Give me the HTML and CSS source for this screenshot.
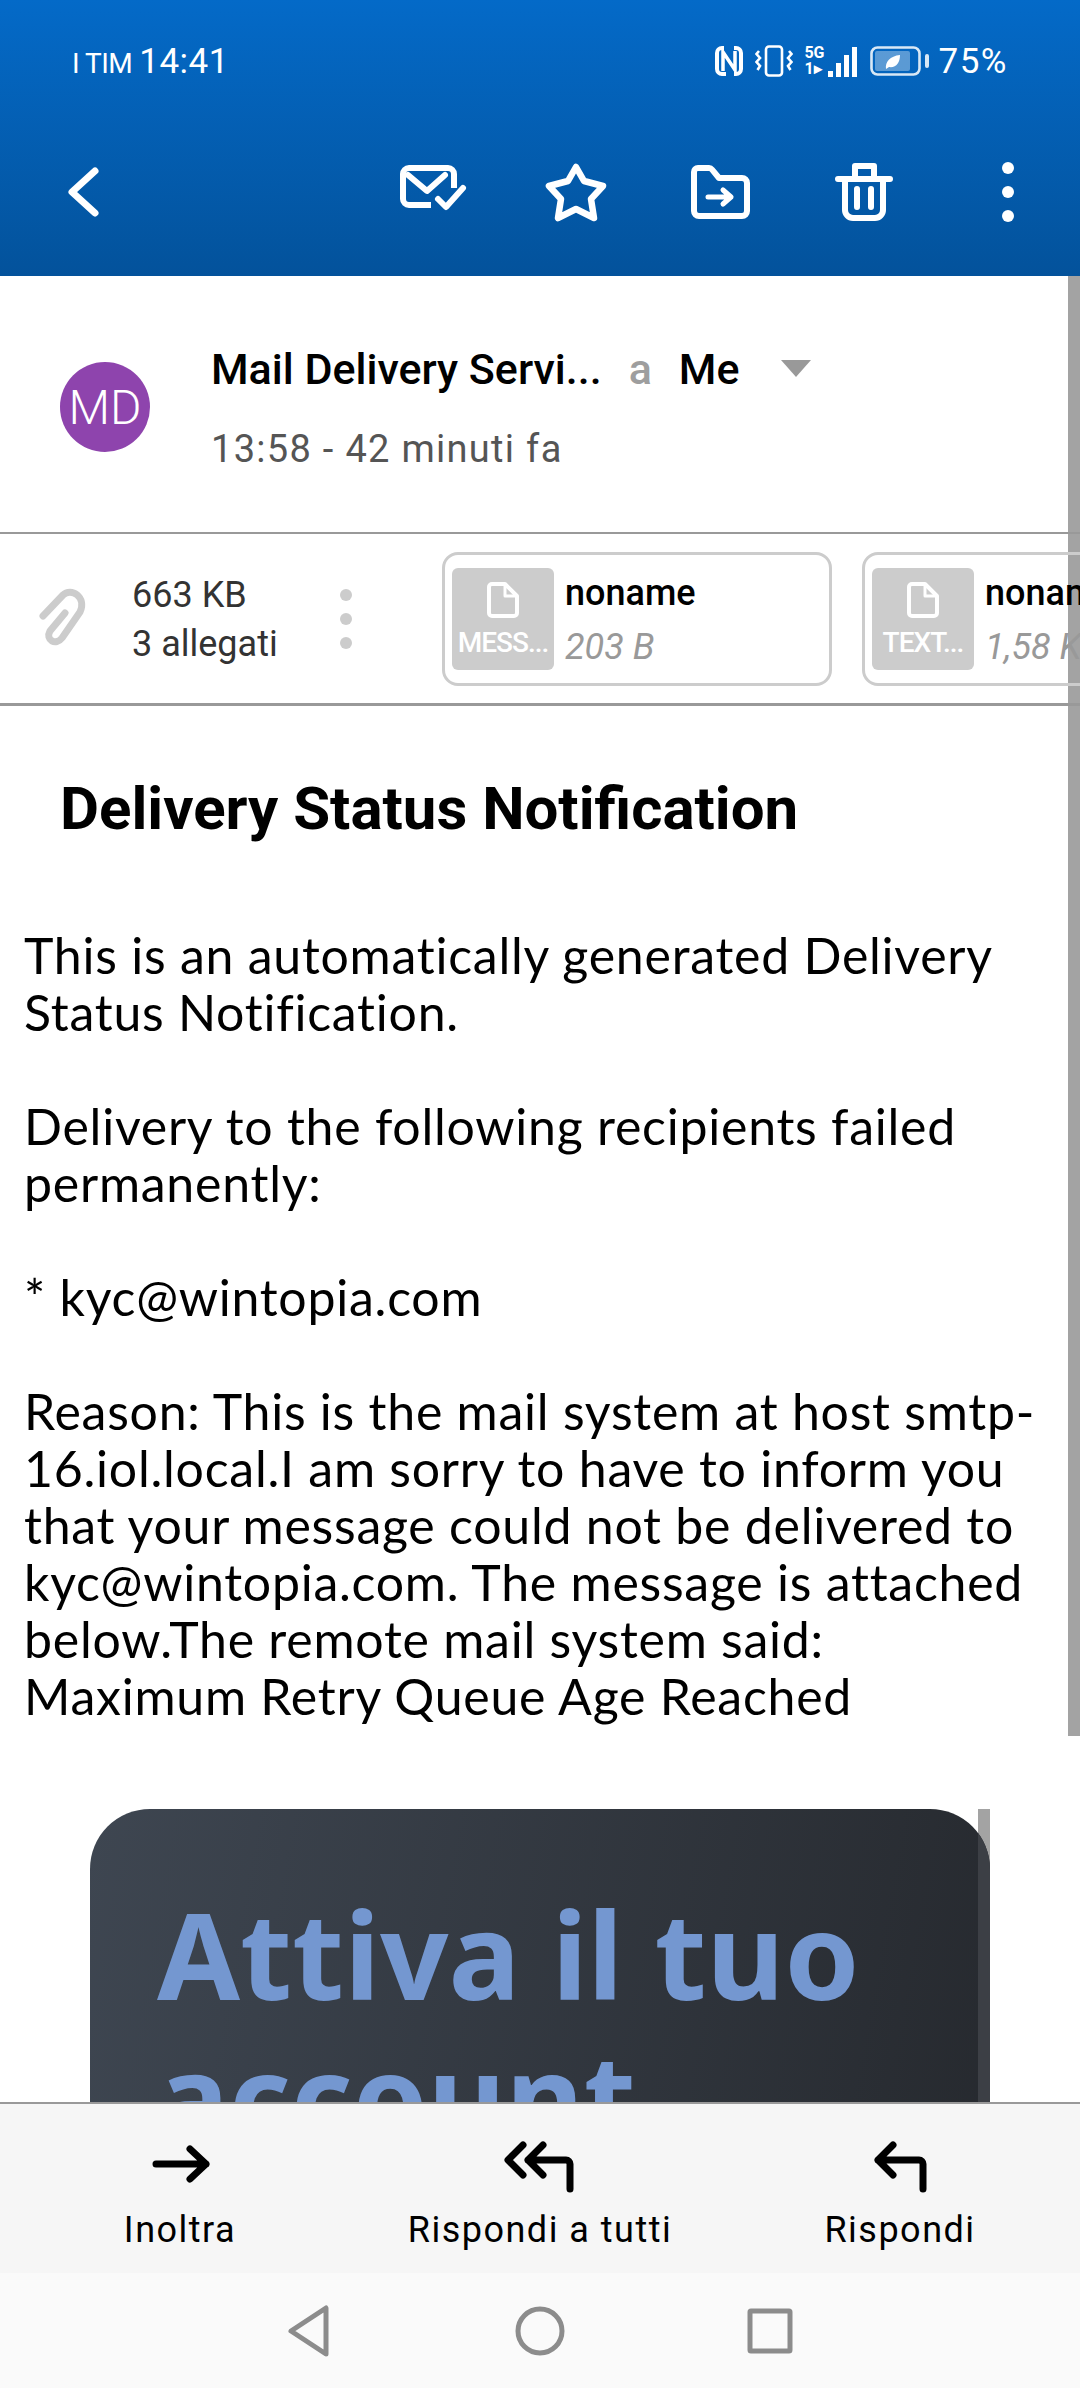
FILE: index.html
```html
<!DOCTYPE html>
<html lang="en">
<head>
  <meta charset="UTF-8">
  <meta name="viewport" content="width=device-width, initial-scale=1.0">
  <title>Delivery Status Notification</title>
  <link rel="stylesheet" href="styles.css">
</head>
<body>
  <div class="app">
    <div class="header">
      <div class="status-bar">
        <div class="status-left">
          <span class="carrier">I TIM</span>
          <span class="clock">14:41</span>
        </div>
        <div class="status-right">
          <!-- nfc -->
          <svg class="st-nfc" viewBox="0 0 28 30" width="28" height="30" fill="none" stroke="#fff">
            <path d="M9 2H7a5 5 0 0 0-5 5v16a5 5 0 0 0 5 5h4M19 2h2a5 5 0 0 1 5 5v16a5 5 0 0 1-5 5h-2" stroke-width="4"/>
            <path d="M8 25V6l12 18V5" stroke-width="3.500"/>
          </svg>
          <!-- vibrate -->
          <svg class="st-vib" viewBox="0 0 38 32" width="38" height="32" fill="none" stroke="#fff" stroke-width="2.600">
            <rect x="11" y="1.500" width="16" height="29" rx="3"/>
            <path d="M4 6 1.500 9 5 13 1.500 17 5 21 2.500 25M34 6l2.500 3L33 13l3.500 4L33 21l2.500 4"/>
          </svg>
          <!-- signal -->
          <div class="st-signal">
            <div class="net">
              <span>5G</span>
              <span>1&#9656;</span>
            </div>
            <div class="bars">
              <i class="b1"></i><i class="b2"></i><i class="b3"></i><i class="b4"></i>
            </div>
          </div>
          <!-- battery -->
          <svg class="st-bat" viewBox="0 0 60 30" width="60" height="30" fill="none">
            <rect x="1.500" y="1.500" width="48" height="27" rx="6" stroke="#fff" stroke-opacity=".85" stroke-width="2.600"/>
            <rect x="5" y="5" width="35" height="20" rx="2" fill="#fff" fill-opacity=".35"/>
            <rect x="55" y="8" width="4" height="14" rx="2" fill="#fff" fill-opacity=".85"/>
            <path d="M16 23c-1-7 4-13 14-14 0 8-4 13-11 12l-3 2z" fill="#fff"/>
          </svg>
          <span class="battery-pct">75%</span>
        </div>
      </div>
      <div class="toolbar">
        <div class="tool back">
          <svg viewBox="0 0 72 72" width="72" height="72" fill="none" stroke="#fff" stroke-width="7" stroke-linecap="round" stroke-linejoin="round">
            <path d="M47 15 24 36l23 21" />
          </svg>
        </div>
        <div class="tool-spacer"></div>
        <div class="tool">
          <svg viewBox="0 0 72 72" width="72" height="72" fill="none" stroke="#fff" stroke-width="6" stroke-linecap="round" stroke-linejoin="round">
            <path d="M35 49H13a6 6 0 0 1-6-6V18a6 6 0 0 1 6-6h39a6 6 0 0 1 6 6v14" stroke-linecap="butt"/>
            <path d="m12 19 19 16 18-16"/>
            <path d="m42 43 8 8 17-19"/>
          </svg>
        </div>
        <div class="tool">
          <svg viewBox="0 0 72 72" width="72" height="72" fill="none" stroke="#fff" stroke-width="6.500" stroke-linejoin="round">
            <path d="M36 11 44 25 63 30 51 43 54 62 36 53 18 62 21 43 9 30 28 25Z"/>
          </svg>
        </div>
        <div class="tool">
          <svg viewBox="0 0 72 72" width="72" height="72" fill="none" stroke="#fff" stroke-width="6" stroke-linecap="round" stroke-linejoin="round">
            <path d="M14 12h11a4 4 0 0 1 3 1.500L35 22h23a5 5 0 0 1 5 5v28a5 5 0 0 1-5 5H15a5 5 0 0 1-5-5V16a4 4 0 0 1 4-4z"/>
            <path d="M24 41h23M39 34l8 7-8 7" stroke-width="5"/>
          </svg>
        </div>
        <div class="tool">
          <svg viewBox="0 0 72 72" width="72" height="72" fill="none" stroke="#fff" stroke-width="6" stroke-linecap="round" stroke-linejoin="round">
            <path d="M10 23h52M27 23V10h19v13M17 23v31a8 8 0 0 0 8 8h22a8 8 0 0 0 8-8V23M29 33v18M43 33v18"/>
          </svg>
        </div>
        <div class="tool">
          <div class="dots">
            <i></i><i></i><i></i>
          </div>
        </div>
      </div>
    </div>

    <div class="mail">
      <div class="scrollbar"></div>

      <div class="sender-row">
        <div class="avatar">MD</div>
        <div class="sender-info">
          <div class="sender-line">
            <span class="sender-name">Mail Delivery Servi...</span>
            <span class="sender-to">a</span>
            <span class="sender-me">Me</span>
            <span class="sender-caret"></span>
          </div>
          <div class="sender-time">13:58 - 42 minuti fa</div>
        </div>
      </div>

      <div class="attach-row">
        <svg class="clip" viewBox="0 0 56 66" width="56" height="66" fill="none" stroke="#ccc" stroke-width="7" stroke-linecap="round" stroke-linejoin="round">
          <path d="M5 30 25 9c8-8 24 2 17 17L24 52c-6 8-17 2-12-7l15-18"/>
        </svg>
        <div class="attach-summary">
          <div>663 KB</div>
          <div>3 allegati</div>
        </div>
        <div class="attach-more">
          <i></i><i></i><i></i>
        </div>
        <div class="chip">
          <div class="thumb">
            <svg viewBox="0 0 32 36" width="32" height="36" fill="none" stroke="#fff" stroke-width="4" stroke-linejoin="round">
              <path d="M5 2h13l12 12v17a3 3 0 0 1-3 3H5a3 3 0 0 1-3-3V5a3 3 0 0 1 3-3z"/>
              <path d="M18 3v11h11" stroke-width="3"/>
            </svg>
            <span>MESS...</span>
          </div>
          <div class="chip-text">
            <div class="chip-name">noname</div>
            <div class="chip-size">203 B</div>
          </div>
        </div>
        <div class="chip">
          <div class="thumb">
            <svg viewBox="0 0 32 36" width="32" height="36" fill="none" stroke="#fff" stroke-width="4" stroke-linejoin="round">
              <path d="M5 2h13l12 12v17a3 3 0 0 1-3 3H5a3 3 0 0 1-3-3V5a3 3 0 0 1 3-3z"/>
              <path d="M18 3v11h11" stroke-width="3"/>
            </svg>
            <span>TEXT...</span>
          </div>
          <div class="chip-text">
            <div class="chip-name">noname</div>
            <div class="chip-size">1,58 KB</div>
          </div>
        </div>
      </div>

      <h1 class="subject">Delivery Status Notification</h1>

      <div class="body-text">
        This is an automatically generated Delivery Status Notification.<br><br>
        Delivery to the following recipients failed permanently:<br><br>
        * kyc@wintopia.com<br><br>
        Reason: This is the mail system at host smtp-16.iol.local.I am sorry to have to inform you that your message could not be delivered to kyc@wintopia.com. The message is attached below.The remote mail system said:<br>
        Maximum Retry Queue Age Reached
      </div>

      <div class="promo">
        <div class="promo-track"></div>
        <div class="promo-card">
          <div class="promo-title">Attiva il tuo account</div>
          <div class="promo-thumb"></div>
        </div>
      </div>
    </div>

    <div class="actions">
      <div class="action">
        <svg viewBox="0 0 72 60" width="72" height="60" fill="none" stroke="#000" stroke-width="7" stroke-linecap="round" stroke-linejoin="round">
          <path d="M12 27h50M46 12l16 15-16 15"/>
        </svg>
        <span>Inoltra</span>
      </div>
      <div class="action">
        <svg viewBox="0 0 72 60" width="72" height="60" fill="none" stroke="#000" stroke-width="7" stroke-linecap="round" stroke-linejoin="round">
          <path d="M19 8 4 23l15 15M39 8 24 23l15 15M24 23h38a4 4 0 0 1 4 4v25"/>
        </svg>
        <span>Rispondi a tutti</span>
      </div>
      <div class="action">
        <svg viewBox="0 0 72 60" width="72" height="60" fill="none" stroke="#000" stroke-width="7" stroke-linecap="round" stroke-linejoin="round">
          <path d="M29 8 14 23l15 15M14 23h41a4 4 0 0 1 4 4v25"/>
        </svg>
        <span>Rispondi</span>
      </div>
    </div>

    <div class="nav-bar">
      <svg viewBox="0 0 60 60" width="60" height="60" fill="none" stroke="#8c8c8c" stroke-width="5" stroke-linejoin="round">
        <path d="M46 7v46L11 30z"/>
      </svg>
      <svg viewBox="0 0 60 60" width="60" height="60" fill="none" stroke="#8c8c8c" stroke-width="5">
        <circle cx="30" cy="30" r="22"/>
      </svg>
      <svg viewBox="0 0 60 60" width="60" height="60" fill="none" stroke="#8c8c8c" stroke-width="5" stroke-linejoin="round">
        <rect x="10" y="10" width="40" height="40" rx="1"/>
      </svg>
    </div>
  </div>
</body>
</html>
```

FILE: styles.css
```css
* {
  box-sizing: border-box;
}

body {
  margin: 0;
  padding: 0;
  background-color: #fff;
  font-family: Roboto, "Liberation Sans", sans-serif;
}

.app {
  width: 1080px;
  height: 2388px;
  display: flex;
  flex-direction: column;
  overflow: hidden;
}

/* top blue area */
.header {
  height: 276px;
  flex: none;
  background: linear-gradient(180deg, #046ac8 0%, #03529b 100%);
  color: #fff;
}

.status-bar {
  height: 108px;
  padding: 14px 72px 0 72px;
  display: flex;
  align-items: center;
  justify-content: space-between;
}

.status-left {
  display: flex;
  align-items: baseline;
  gap: 7px;
}

.carrier {
  font-size: 28px;
  letter-spacing: -0.5px;
}

.clock {
  font-size: 35px;
  letter-spacing: 0.5px;
}

.status-right {
  display: flex;
  align-items: center;
}

.st-vib {
  margin-left: 12px;
}

.st-signal {
  margin-left: 11px;
  display: flex;
  align-items: flex-end;
  gap: 3px;
}

.net {
  display: flex;
  flex-direction: column;
  font-size: 16px;
  font-weight: 700;
  line-height: 16px;
}

.bars {
  display: flex;
  align-items: flex-end;
  gap: 3px;
  height: 30px;
}

.bars i {
  display: block;
  width: 5px;
  background-color: #fff;
}

.bars .b1 { height: 6px; }
.bars .b2 { height: 14px; }
.bars .b3 { height: 22px; }
.bars .b4 { height: 30px; }

.st-bat {
  margin-left: 13px;
}

.battery-pct {
  margin-left: 9px;
  font-size: 35px;
  letter-spacing: 1.5px;
}

.toolbar {
  height: 168px;
  padding: 0 0 0 12px;
  display: flex;
  align-items: center;
}

.tool {
  width: 144px;
  display: flex;
  justify-content: center;
}

.tool-spacer {
  flex: 1;
}

.dots {
  display: flex;
  flex-direction: column;
  gap: 12px;
}

.dots i {
  display: block;
  width: 12px;
  height: 12px;
  border-radius: 50%;
  background-color: #fff;
}

/* mail content */
.mail {
  flex: 1;
  min-height: 0;
  position: relative;
  overflow: hidden;
  background-color: #fff;
}

.scrollbar {
  position: absolute;
  top: 0;
  right: 0;
  width: 12px;
  height: 1460px;
  background-color: #a3a3a3;
}

.sender-row {
  height: 256px;
  padding: 0 0 0 60px;
  display: flex;
  align-items: center;
}

.avatar {
  width: 90px;
  height: 90px;
  flex: none;
  margin-top: 6px;
  border-radius: 50%;
  background-color: #8e44ad;
  color: #fff;
  font-size: 48px;
  font-weight: 300;
  display: flex;
  align-items: center;
  justify-content: center;
}

.sender-info {
  margin-left: 61px;
  margin-top: 7px;
}

.sender-line {
  display: flex;
  align-items: center;
  height: 50px;
  font-size: 43px;
  font-weight: 500;
  color: #000;
}

.sender-to {
  margin-left: 27px;
  color: #9e9e9e;
}

.sender-me {
  margin-left: 27px;
}

.sender-caret {
  margin-left: 42px;
  width: 0;
  height: 0;
  border-left: 15px solid transparent;
  border-right: 15px solid transparent;
  border-top: 17px solid #999;
  margin-top: -2px;
}

.sender-time {
  margin-top: 33px;
  font-size: 38px;
  letter-spacing: 1.3px;
  color: #555;
}

.attach-row {
  position: relative;
  height: 174px;
  border-top: 2px solid #999;
  border-bottom: 3px solid #999;
  display: flex;
  align-items: center;
  overflow: hidden;
}

.clip {
  flex: none;
  margin-left: 38px;
}

.attach-summary {
  flex: none;
  width: 200px;
  margin-left: 38px;
  margin-top: 3px;
  font-size: 36px;
  line-height: 49px;
  color: #333;
}

.attach-more {
  flex: none;
  width: 24px;
  margin-left: 2px;
  display: flex;
  flex-direction: column;
  align-items: center;
  gap: 12px;
}

.attach-more i {
  display: block;
  width: 12px;
  height: 12px;
  border-radius: 50%;
  background-color: #ccc;
}

.chip {
  flex: none;
  width: 390px;
  height: 134px;
  margin-left: 30px;
  padding: 0 0 0 7px;
  border: 3px solid #ccc;
  border-radius: 16px;
  display: flex;
  align-items: center;
}

.chip + .chip {
  margin-left: 30px;
}

.attach-more + .chip {
  margin-left: 84px;
}

.thumb {
  width: 102px;
  height: 102px;
  flex: none;
  background-color: #ccc;
  border-radius: 6px;
  color: #fff;
  display: flex;
  flex-direction: column;
  align-items: center;
  padding-top: 14px;
  gap: 8px;
  font-size: 28px;
  font-weight: 500;
  letter-spacing: -1px;
  overflow: hidden;
  white-space: nowrap;
}

.chip-text {
  margin-left: 11px;
  margin-top: 2px;
}

.chip-name {
  font-size: 36px;
  font-weight: 500;
  color: #000;
  line-height: 42px;
}

.chip-size {
  margin-top: 12px;
  font-size: 36px;
  font-style: italic;
  color: #999;
  line-height: 42px;
}

.subject {
  margin: 0;
  padding: 68px 0 0 60px;
  font-size: 60px;
  font-weight: 700;
  line-height: 70px;
  color: #000;
}

.body-text {
  margin-top: 83px;
  padding: 0 20px 0 24px;
  font-family: Lato, "Noto Sans", sans-serif;
  font-size: 50px;
  line-height: 57px;
  letter-spacing: 0.75px;
  color: #000;
}

.promo {
  position: relative;
  margin: 84px 90px 0 90px;
}

.promo-track {
  position: absolute;
  top: 0;
  right: 0;
  width: 12px;
  height: 100px;
  background-color: #a3a3a3;
}

.promo-card {
  position: relative;
  height: 640px;
  padding: 74px 50px 0 67px;
  border-radius: 60px;
  background: linear-gradient(100deg, #3e4651 0%, #25282d 100%);
  overflow: hidden;
}

.promo-thumb {
  position: absolute;
  top: 0;
  right: 0;
  width: 12px;
  height: 100%;
  background-color: #3c3f45;
}

.promo-title {
  font-family: "Noto Sans", sans-serif;
  font-size: 120px;
  font-weight: 700;
  line-height: 142px;
  color: #7497d0;
}

/* bottom bars */
.actions {
  height: 171px;
  flex: none;
  border-top: 2px solid #999;
  background-color: #f6f6f6;
  display: grid;
  grid-template-columns: 360px 360px 360px;
}

.action {
  display: flex;
  flex-direction: column;
  align-items: center;
  padding-top: 33px;
  gap: 12px;
  font-size: 36px;
  letter-spacing: 1.5px;
  color: #000;
}

.nav-bar {
  height: 115px;
  flex: none;
  background-color: #fafafa;
  display: flex;
  justify-content: center;
  align-items: center;
  gap: 170px;
}
```
